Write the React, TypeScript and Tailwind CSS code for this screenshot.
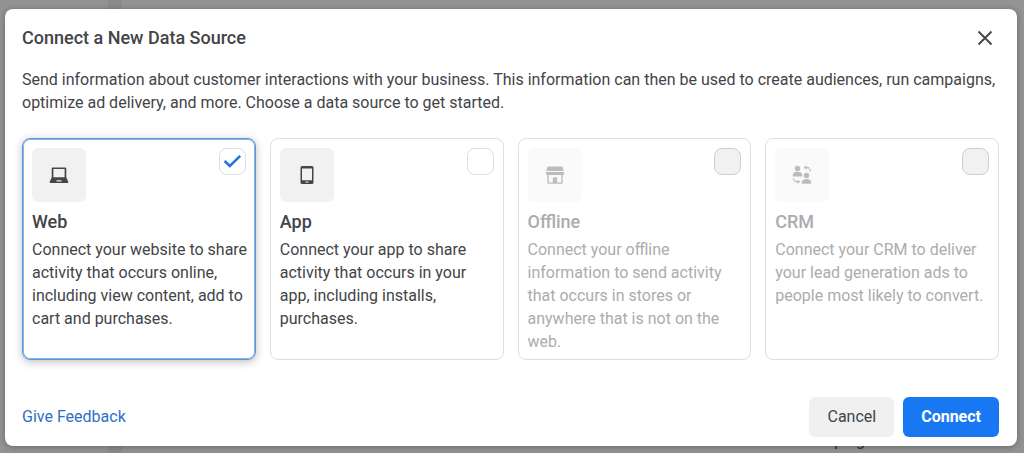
import React, { useState } from "react";
import clsx from "clsx";

interface DataSource {
  id: string;
  title: string;
  description: string;
  icon: React.ReactNode;
  disabled?: boolean;
}

const LaptopIcon = () => (
  <svg width="20" height="20" viewBox="0 0 20 20" fill="currentColor" aria-hidden="true">
    <path
      fillRule="evenodd"
      d="M4 2.500h12c.8 0 1.300.5 1.300 1.200V13H2.700V3.700c0-.7.500-1.200 1.300-1.200zM4.400 4v8.500h11.200V4z"
    />
    <path
      fillRule="evenodd"
      d="M2.700 12.500h14.600l1.900 4c.3.900-.1 1.500-1 1.500H1.800c-.9 0-1.300-.6-1-1.500zM7.500 15.200v1.400h5v-1.400z"
    />
  </svg>
);

const PhoneIcon = () => (
  <svg width="20" height="20" viewBox="0 0 20 20" fill="currentColor" aria-hidden="true">
    <path
      fillRule="evenodd"
      d="M5 1h10a1.500 1.500 0 0 1 1.500 1.500v15A1.500 1.500 0 0 1 15 19H5a1.500 1.500 0 0 1-1.500-1.500v-15A1.500 1.500 0 0 1 5 1zM5 3.500V15.200h10V3.500zM8.500 16.500v1h3v-1z"
    />
  </svg>
);

const StoreIcon = () => (
  <svg width="20" height="20" viewBox="0 0 20 20" fill="currentColor" aria-hidden="true">
    <path d="M3.500 1.500h13c.6 0 1 .3 1.200.8L18.700 6H1.300l1-3.700c.200-.5.600-.8 1.200-.8z" />
    <path d="M1 7h18v1.500a1.500 1.500 0 0 1-1.500 1.500h-15A1.500 1.500 0 0 1 1 8.500z" />
    <path d="M2.300 10h1.400v7.400h12.600V10h1.400v7.500c0 .8-.4 1.200-1.200 1.200h-13c-.8 0-1.200-.4-1.200-1.200z" />
    <path d="M7.800 18v-4.500c0-.8.4-1.200 1.200-1.200h2c.8 0 1.200.4 1.200 1.200V18z" />
  </svg>
);

const PeopleIcon = () => (
  <svg width="20" height="20" viewBox="0 0 20 20" fill="currentColor" aria-hidden="true">
    <circle cx="5.500" cy="3.500" r="2.700" />
    <path d="M.800 11.500v-1.500C.800 8 2.600 6.800 5.500 6.800S10.200 8 10.200 10v1.500z" />
    <circle cx="14.500" cy="10.500" r="2.700" />
    <path d="M9.800 18.800v-1.500c0-2 1.800-3.300 4.700-3.300s4.700 1.300 4.700 3.300v1.500z" />
    <path d="M11.500 2.500L14.500.300v4.400z" />
    <path d="M8.300 16.800l-3-2.200V19z" />
    <path
      d="M14.500 2.500c2.500 0 3.800 1.200 3.800 3.800M5.300 16.800c-2.500 0-3.800-1-3.800-3.300"
      fill="none"
      stroke="currentColor"
      strokeWidth="1.400"
      strokeDasharray="3.200 .8"
    />
  </svg>
);

const sources: DataSource[] = [
  {
    id: "web",
    title: "Web",
    description:
      "Connect your website to share activity that occurs online, including view content, add to cart and purchases.",
    icon: <LaptopIcon />,
  },
  {
    id: "app",
    title: "App",
    description:
      "Connect your app to share activity that occurs in your app, including installs, purchases.",
    icon: <PhoneIcon />,
  },
  {
    id: "offline",
    title: "Offline",
    description:
      "Connect your offline information to send activity that occurs in stores or anywhere that is not on the web.",
    icon: <StoreIcon />,
    disabled: true,
  },
  {
    id: "crm",
    title: "CRM",
    description:
      "Connect your CRM to deliver your lead generation ads to people most likely to convert.",
    icon: <PeopleIcon />,
    disabled: true,
  },
];

interface SourceCardProps {
  source: DataSource;
  checked: boolean;
  onSelect: (id: string) => void;
}

const SourceCard: React.FC<SourceCardProps> = ({ source, checked, onSelect }) => (
  <label
    htmlFor={source.id}
    className={clsx(
      "block rounded-lg border px-[9px] pt-[9px] pb-[6px]",
      checked
        ? "border-[#5a96dc] ring-1 ring-inset ring-[#8db4e2] shadow-[0_2px_8px_rgba(0,0,0,0.25)]"
        : "border-[#dcdee1]",
      source.disabled ? "text-[#acacae]" : "text-[#434447] cursor-pointer"
    )}
  >
    <div className="flex items-start justify-between">
      <div
        className={clsx(
          "flex h-[54px] w-[54px] items-center justify-center rounded-md",
          source.disabled ? "bg-[#fafafa] text-[#bcbcbf]" : "bg-[#f1f1f1] text-[#45464b]"
        )}
      >
        {source.icon}
      </div>
      <span className="relative flex">
        <input
          id={source.id}
          type="checkbox"
          checked={checked}
          disabled={source.disabled}
          onChange={() => onSelect(source.id)}
          className="h-[27px] w-[27px] appearance-none rounded-lg border border-[#dcdee3] bg-white disabled:border-[#cfcfcf] disabled:bg-[#f1f1f1]"
        />
        {checked && (
          <svg
            width="19"
            height="19"
            viewBox="0 0 18 18"
            className="pointer-events-none absolute inset-0 m-auto text-[#2374e1]"
            aria-hidden="true"
          >
            <path d="M1.500 8.500l5 4.700L16.300 3.700" fill="none" stroke="currentColor" strokeWidth="2.400" />
          </svg>
        )}
      </span>
    </div>
    <h2 className="mt-2 text-lg leading-6 font-medium">{source.title}</h2>
    <p className="-mr-1 mt-1 text-base leading-[23px]">{source.description}</p>
  </label>
);

const App: React.FC = () => {
  const [selected, setSelected] = useState("web");

  return (
    <div
      className="relative flex min-h-screen flex-col bg-[#939393] pt-[9px] pr-[7px] pb-[7px] pl-[5px] text-[#434447]"
      style={{ fontFamily: 'Roboto, "Liberation Sans", sans-serif' }}
    >
      {/* Dimmed page behind the dialog */}
      <div className="absolute inset-y-0 left-[108px] w-[14px] bg-[#8b8b8b]" />
      <span className="absolute right-[142px] bottom-0 text-base text-[#2c2c2c]" aria-hidden="true">
        Campaigns
      </span>

      <div
        role="dialog"
        aria-labelledby="dialog-title"
        className="relative flex flex-1 flex-col rounded-lg bg-white pt-[17px] pr-[18px] pb-[9px] pl-[17px] shadow-[0_1px_6px_rgba(0,0,0,0.3)]"
      >
        <div className="flex items-center justify-between">
          <h1 id="dialog-title" className="text-lg leading-6 font-medium">
            Connect a New Data Source
          </h1>
          <button type="button" aria-label="Close" className="flex h-6 w-7 items-center justify-center">
            <svg width="16" height="16" viewBox="0 0 16 16" aria-hidden="true">
              <path d="M1.500 1.500l13 13M14.500 1.500l-13 13" stroke="#444444" strokeWidth="1.800" fill="none" />
            </svg>
          </button>
        </div>

        <p className="mt-[18px] text-base leading-[23px]">
          Send information about customer interactions with your business. This information can then
          be used to create audiences, run campaigns, optimize ad delivery, and more. Choose a data
          source to get started.
        </p>

        <div className="mt-6 grid grid-cols-4 gap-[14px]">
          {sources.map((source) => (
            <SourceCard
              key={source.id}
              source={source}
              checked={selected === source.id}
              onSelect={setSelected}
            />
          ))}
        </div>

        <div className="mt-auto flex items-center justify-between">
          <a href="#feedback" className="text-base text-[#2e6fc4]">
            Give Feedback
          </a>
          <div className="flex gap-[9px]">
            <button type="button" className="h-10 rounded-md bg-[#f0f0f0] px-[18px] text-base">
              Cancel
            </button>
            <button
              type="button"
              className="h-10 rounded-md bg-[#1877f2] px-[18px] text-base font-bold text-white"
            >
              Connect
            </button>
          </div>
        </div>
      </div>
    </div>
  );
};

export default App;
